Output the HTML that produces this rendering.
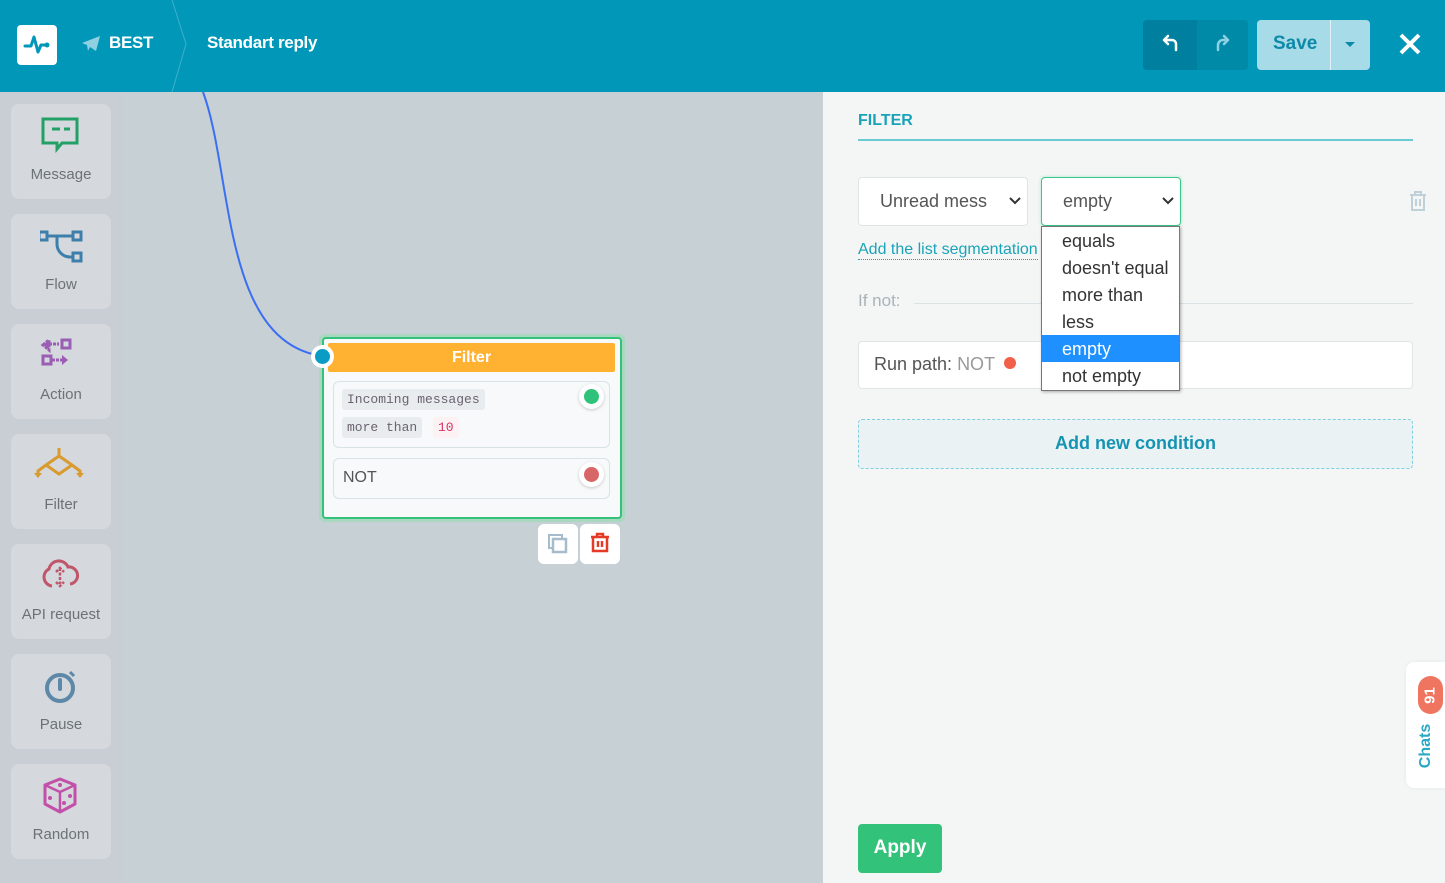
<!DOCTYPE html>
<html><head><meta charset="utf-8"><style>
*{box-sizing:border-box;margin:0;padding:0}
body{width:1445px;height:883px;overflow:hidden;font-family:"Liberation Sans",sans-serif;background:#c6d0d5;position:relative}
.hdr{position:absolute;left:0;top:0;width:1445px;height:92px;background:#0097b8}
.side{position:absolute;left:0;top:92px;width:123px;height:791px;background:#c8ced3}
.tile{position:absolute;left:11px;width:100px;height:95px;background:#d5d8dc;border-radius:8px;text-align:center;font-size:15px;color:#6b7378}
.tile svg{position:absolute;left:29px;top:12px}
.tile span{position:absolute;left:0;right:0;top:62px}
.panel{position:absolute;left:823px;top:92px;width:622px;height:791px;background:#f4f6f5}
.abs{position:absolute}
</style></head><body>
<div class="hdr">
  <div class="abs" style="left:17px;top:25px;width:40px;height:40px;background:#fff;border-radius:4px">
    <svg width="40" height="40"><path d="M8 21h6l3-9 4 15 3-7h5" fill="none" stroke="#0097b8" stroke-width="3" stroke-linejoin="round" stroke-linecap="round"/><circle cx="30" cy="20" r="2.5" fill="#0097b8"/></svg>
  </div>
  <svg class="abs" style="left:81px;top:35px" width="20" height="17"><path d="M1 8L19 1L15 16L9 12L7 16L6 10Z" fill="#8fd1e2"/></svg>
  <div class="abs" style="left:109px;top:33px;color:#fff;font-weight:bold;font-size:17px;letter-spacing:-0.3px">BEST</div>
  <svg class="abs" style="left:170px;top:0" width="20" height="92"><path d="M2 0L16 44L2 92" fill="none" stroke="#3fb0cc" stroke-width="1"/></svg>
  <div class="abs" style="left:207px;top:33px;color:#fff;font-weight:bold;font-size:17px;letter-spacing:-0.3px">Standart reply</div>
  <div class="abs" style="left:1143px;top:20px;width:54px;height:50px;background:#00809e;border-radius:4px 0 0 4px"></div>
  <div class="abs" style="left:1197px;top:20px;width:51px;height:50px;background:#008aa8;border-radius:0 4px 4px 0"></div>
  <svg class="abs" style="left:1160px;top:33px" width="20" height="20"><path d="M4 7h8a4 4 0 0 1 4 4v6M4 7l4-4M4 7l4 4" fill="none" stroke="#fff" stroke-width="2.5" stroke-linecap="round"/></svg>
  <svg class="abs" style="left:1212px;top:33px" width="20" height="20"><path d="M16 7H11a5 5 0 0 0-5 5v5M16 7l-4-4M16 7l-4 4" fill="none" stroke="#8fd1e2" stroke-width="2.5" stroke-linecap="round"/></svg>
  <div class="abs" style="left:1257px;top:20px;width:113px;height:50px;background:#a8dbe8;border-radius:4px"></div>
  <div class="abs" style="left:1330px;top:20px;width:1px;height:50px;background:#e0f2f7"></div>
  <div class="abs" style="left:1273px;top:33px;color:#0d8aa8;font-weight:bold;font-size:19px">Save</div>
  <div class="abs" style="left:1345px;top:42px;border-left:5px solid transparent;border-right:5px solid transparent;border-top:5px solid #0d8aa8"></div>
  <svg class="abs" style="left:1398px;top:32px" width="24" height="24"><path d="M3 3L21 21M21 3L3 21" stroke="#fff" stroke-width="4"/></svg>
</div>
<div class="side">
  <div class="tile" style="top:12px"><svg width="42" height="40"><path d="M3 3h34v24H22l-5 6v-6H3z" fill="none" stroke="#23a066" stroke-width="3"/><path d="M12 13h8M24 13h6" stroke="#23a066" stroke-width="3"/></svg><span>Message</span></div>
  <div class="tile" style="top:122px"><svg width="48" height="40"><rect x="-1" y="6" width="8" height="8" fill="none" stroke="#3d7fac" stroke-width="3"/><rect x="33" y="6" width="8" height="8" fill="none" stroke="#3d7fac" stroke-width="3"/><rect x="33" y="27" width="8" height="8" fill="none" stroke="#3d7fac" stroke-width="3"/><path d="M7 10h26M17 10v8a13 13 0 0 0 13 13h3" fill="none" stroke="#3d7fac" stroke-width="3"/></svg><span>Flow</span></div>
  <div class="tile" style="top:232px"><svg width="42" height="40"><path d="M3 9l6-5v10z M9 8h10" fill="#9a5fb4" stroke="#9a5fb4" stroke-width="3" stroke-dasharray="3 1"/><rect x="22" y="4" width="8" height="8" fill="none" stroke="#9a5fb4" stroke-width="3"/><rect x="3" y="20" width="8" height="8" fill="none" stroke="#9a5fb4" stroke-width="3"/><path d="M12 24h10" stroke="#9a5fb4" stroke-width="3" stroke-dasharray="3 1"/><path d="M22 19l6 5-6 5z" fill="#9a5fb4"/></svg><span>Action</span></div>
  <div class="tile" style="top:342px"><svg width="52" height="40" style="left:22px;top:14px"><path d="M26 0v8M26 8L13 17l13 9 13-9zM13 17l-8 6v4M39 17l8 6v4" fill="none" stroke="#d99a30" stroke-width="3"/><path d="M1 25h8l-4 5zM43 25h8l-4 5z" fill="#d99a30"/></svg><span>Filter</span></div>
  <div class="tile" style="top:452px"><svg width="42" height="40"><path d="M12 30a9 9 0 0 1-3-17 10 10 0 0 1 19-2 8 8 0 0 1 2 17" fill="none" stroke="#c0566a" stroke-width="3"/><path d="M20 12v16M16 16l4-4 4 4M16 26l4 4 4-4" fill="none" stroke="#c0566a" stroke-width="2.5" stroke-dasharray="3 1.5"/></svg><span>API request</span></div>
  <div class="tile" style="top:562px"><svg width="42" height="40"><circle cx="20" cy="22" r="13" fill="none" stroke="#5e88a8" stroke-width="4"/><path d="M20 14v9" stroke="#5e88a8" stroke-width="4" stroke-linecap="round"/><path d="M30 6l4 4" stroke="#5e88a8" stroke-width="3"/></svg><span>Pause</span></div>
  <div class="tile" style="top:672px"><svg width="42" height="40"><path d="M20 3l15 6v19l-15 8-15-8V9z" fill="none" stroke="#c250a8" stroke-width="3" stroke-linejoin="round"/><path d="M5 9l15 7 15-7M20 16v20" fill="none" stroke="#c250a8" stroke-width="2.5"/><circle cx="20" cy="9" r="2" fill="#c250a8"/><circle cx="10" cy="22" r="2" fill="#c250a8"/><circle cx="24" cy="27" r="2" fill="#c250a8"/><circle cx="30" cy="20" r="2" fill="#c250a8"/></svg><span>Random</span></div>
</div>
<svg class="abs" style="left:0;top:0" width="823" height="883"><path d="M203 92C232 170 222 330 312 354" fill="none" stroke="#3b6ef2" stroke-width="2"/></svg>
<div class="abs" style="left:319px;top:334px;width:306px;height:188px;border:4px solid #a8d9c0;border-radius:6px"></div>
<div class="abs" style="left:322px;top:337px;width:300px;height:182px;border:2px solid #34c27a;border-radius:4px;background:#f8f9fa"></div>
<div class="abs" style="left:328px;top:343px;width:287px;height:29px;background:#ffb232;border-radius:2px;color:#fff;font-weight:bold;font-size:16px;text-align:center;line-height:29px">Filter</div>
<div class="abs" style="left:311px;top:345px;width:23px;height:23px;border-radius:50%;background:#fff"></div>
<div class="abs" style="left:315px;top:349px;width:15px;height:15px;border-radius:50%;background:#0a9cc4"></div>
<div class="abs" style="left:333px;top:381px;width:277px;height:67px;border:1px solid #d7e3e4;border-radius:6px;background:#f8f9fa"></div>
<div class="abs" style="left:342px;top:389px;padding:0 5px;height:21px;line-height:21px;background:#e9ecef;border-radius:3px;font-family:'Liberation Mono',monospace;font-size:13px;color:#6b6270">Incoming messages</div>
<div class="abs" style="left:342px;top:417px;padding:0 5px;height:21px;line-height:21px;background:#e9ecef;border-radius:3px;font-family:'Liberation Mono',monospace;font-size:13px;color:#6b6270">more than</div>
<div class="abs" style="left:433px;top:417px;padding:0 5px;height:21px;line-height:21px;background:#fcf1f3;border-radius:3px;font-family:'Liberation Mono',monospace;font-size:13px;color:#d6336c">10</div>
<div class="abs" style="left:579px;top:384px;width:25px;height:25px;border-radius:50%;background:#fff;box-shadow:0 1px 3px rgba(0,0,0,.2)"></div>
<div class="abs" style="left:584px;top:389px;width:15px;height:15px;border-radius:50%;background:#2fc27a"></div>
<div class="abs" style="left:333px;top:458px;width:277px;height:41px;border:1px solid #d7e3e4;border-radius:6px;background:#f8f9fa;font-size:16px;color:#555;padding:10px 0 0 9px">NOT</div>
<div class="abs" style="left:579px;top:462px;width:25px;height:25px;border-radius:50%;background:#fff;box-shadow:0 1px 3px rgba(0,0,0,.2)"></div>
<div class="abs" style="left:584px;top:467px;width:15px;height:15px;border-radius:50%;background:#d86666"></div>
<div class="abs" style="left:538px;top:524px;width:40px;height:40px;background:#fff;border-radius:6px"><svg width="40" height="40"><rect x="11" y="11" width="13" height="13" fill="none" stroke="#a6bccb" stroke-width="2"/><rect x="15" y="15" width="13" height="13" fill="#fff" stroke="#a6bccb" stroke-width="2.5"/></svg></div>
<div class="abs" style="left:580px;top:524px;width:40px;height:40px;background:#fff;border-radius:6px"><svg width="40" height="40"><path d="M11 13h18M17 13v-3h6v3M13 13v14h14V13M18 17v6M22 17v6" fill="none" stroke="#e53b26" stroke-width="2.5"/></svg></div>

<div class="panel">
  <div class="abs" style="left:35px;top:20px;color:#1aa3b8;font-weight:bold;font-size:16px">FILTER</div>
  <div class="abs" style="left:35px;top:47px;width:555px;height:2px;background:#6ccbd2"></div>
  <div class="abs" style="left:35px;top:85px;width:170px;height:49px;background:#fff;border:1px solid #e0e4e4;border-radius:4px;font-size:18px;color:#555;padding:13px 0 0 21px">Unread mess</div>
  <svg class="abs" style="left:186px;top:104px" width="12" height="10"><path d="M1 2l5 5 5-5" fill="none" stroke="#333" stroke-width="2"/></svg>
  <div class="abs" style="left:218px;top:85px;width:140px;height:49px;background:#fff;border:1px solid #3cc88a;border-radius:4px;font-size:18px;color:#555;padding:13px 0 0 21px;box-shadow:0 0 3px rgba(60,200,138,.4)">empty</div>
  <svg class="abs" style="left:339px;top:104px" width="12" height="10"><path d="M1 2l5 5 5-5" fill="none" stroke="#333" stroke-width="2"/></svg>
  <svg class="abs" style="left:585px;top:98px" width="20" height="22"><path d="M2 5h16M7 5V2h6v3M4 5v15h12V5M8 9v7M12 9v7" fill="none" stroke="#bfd0d8" stroke-width="2"/></svg>
  <div class="abs" style="left:35px;top:148px;font-size:16px;color:#1aa3b8;border-bottom:1px dotted #1aa3b8;line-height:19px">Add the list segmentation</div>
  <div class="abs" style="left:35px;top:199px;font-size:17px;color:#a9b3b8">If not:</div>
  <div class="abs" style="left:91px;top:211px;width:499px;height:1px;background:#dbe2e4"></div>
  <div class="abs" style="left:35px;top:249px;width:555px;height:48px;background:#fff;border:1px solid #e0e4e4;border-radius:4px;font-size:18px;color:#555;padding:12px 0 0 15px">Run path: <span style="color:#999">NOT</span></div>
  <div class="abs" style="left:181px;top:265px;width:12px;height:12px;border-radius:50%;background:#f2604a"></div>
  <div class="abs" style="left:218px;top:134px;width:139px;height:165px;background:#fff;border:1px solid #777;box-shadow:1px 1px 3px rgba(0,0,0,.3);font-size:18px;color:#333">
    <div style="height:27px;line-height:29px;padding-left:20px">equals</div>
    <div style="height:27px;line-height:29px;padding-left:20px">doesn't equal</div>
    <div style="height:27px;line-height:29px;padding-left:20px">more than</div>
    <div style="height:27px;line-height:29px;padding-left:20px">less</div>
    <div style="height:27px;line-height:29px;padding-left:20px;background:#1e90ff;color:#fff">empty</div>
    <div style="height:27px;line-height:29px;padding-left:20px">not empty</div>
  </div>
  <div class="abs" style="left:35px;top:327px;width:555px;height:50px;background:#eaf2f4;border:1px dashed #7fcfe0;border-radius:4px;text-align:center;line-height:47px;color:#1593b2;font-weight:bold;font-size:18px">Add new condition</div>
  <div class="abs" style="left:35px;top:732px;width:84px;height:49px;background:#33c27a;border-radius:4px;color:#fff;font-weight:bold;font-size:19px;text-align:center;line-height:47px">Apply</div>
  <div class="abs" style="left:583px;top:570px;width:45px;height:126px;background:#fff;border-radius:8px;box-shadow:0 0 4px rgba(0,0,0,.06)"></div>
  <div class="abs" style="left:595px;top:584px;width:25px;height:38px;background:#f07560;border-radius:13px"></div>
  <div class="abs" style="left:594px;top:595px;width:26px;color:#fff;font-weight:bold;font-size:15px;transform:rotate(-90deg);text-align:center">91</div>
  <div class="abs" style="left:578px;top:645px;width:50px;color:#2aa8c4;font-weight:bold;font-size:16px;transform:rotate(-90deg);text-align:center">Chats</div>
</div>
</body></html>
